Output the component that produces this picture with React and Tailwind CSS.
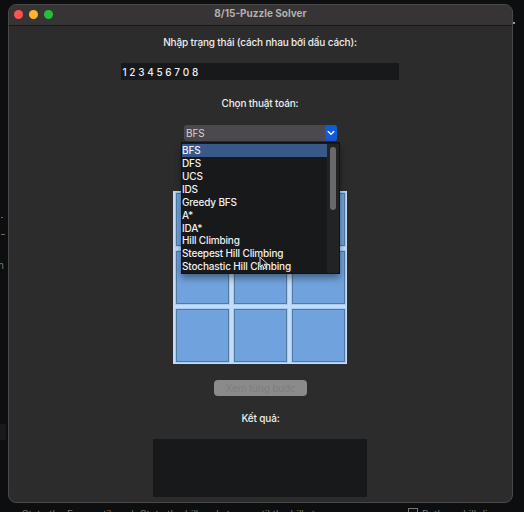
import React from "react";

const algorithms = [
  "BFS",
  "DFS",
  "UCS",
  "IDS",
  "Greedy BFS",
  "A*",
  "IDA*",
  "Hill Climbing",
  "Steepest Hill Climbing",
  "Stochastic Hill Climbing",
];

function TitleBar() {
  return (
    <header className="grid h-[21px] grid-cols-[80px_1fr_80px] items-center border-b border-[#171717] bg-[#373435]">
      <div className="-mt-px flex gap-[6px] pl-[5px]">
        <span className="size-[9px] rounded-full bg-[#ff544d]" />
        <span className="size-[9px] rounded-full bg-[#ffb429]" />
        <span className="size-[9px] rounded-full bg-[#24c138]" />
      </div>
      <h1 className="-mt-[4px] whitespace-nowrap text-center text-[10px] font-bold leading-[14px] text-[#b2b0b1]">
        8/15-Puzzle Solver
      </h1>
    </header>
  );
}

function Cursor() {
  return (
    <svg className="absolute left-[77px] top-[113px]" width="10" height="14" viewBox="0 0 10 14">
      <path d="M1 1v10l2.4-2.2 1.7 3.8 1.8-.8-1.7-3.6h3.5z" fill="#161718" stroke="#e4e4e4" strokeWidth="1" />
    </svg>
  );
}

function Dropdown() {
  return (
    <div className="absolute -left-[3px] top-[17px] z-10 flex h-[132px] w-[159px] border border-[#101112] bg-[#18191a] pt-px shadow-[0_4px_7px_rgba(0,0,0,0.4)]">
      <ul className="w-[145px] overflow-hidden">
        {algorithms.map((name, i) => (
          <li
            key={name}
            className={`h-[12.93px] whitespace-nowrap text-[10px] leading-[12px] text-[#f0f0f0] ${i === 0 ? "bg-[#38588a]" : ""}`}
          >
            {name}
          </li>
        ))}
      </ul>
      <div className="flex flex-1 justify-center bg-[#232324] pt-[3px]">
        <div className="h-[63px] w-[6px] rounded-full bg-[#68696a]" />
      </div>
      <Cursor />
    </div>
  );
}

function Board() {
  return (
    <div className="mt-[50px] grid h-[173px] w-[174px] grid-cols-3 grid-rows-3 gap-[5px] bg-[#c2dcfa] p-[2px] pl-[3px]">
      {Array.from({ length: 9 }, (_, i) => (
        <div key={i} className="border border-[#52799f] bg-[#70a2de] outline outline-1 outline-[#a7ccef]" />
      ))}
    </div>
  );
}

export default function App() {
  return (
    <div className="relative h-[512px] w-[524px] overflow-hidden bg-[#0d0e0f] pl-[8px] pt-[4px] font-['Inter','Noto_Sans',sans-serif]">
      <span className="absolute -left-[2px] top-[259px] text-[10px] leading-[12px] text-[#777]">n</span>
      <span className="absolute left-px top-[234px] h-px w-[4px] bg-[#666]" />
      <span className="absolute left-px top-[217px] h-px w-[2px] bg-[#666]" />
      <span className="absolute left-0 top-[424px] h-[16px] w-[6px] bg-[#17191b]" />
      <span className="absolute left-[513px] top-[22px] h-[2px] w-[2px] bg-[#999]" />
      <main className="h-[499px] w-[505px] overflow-hidden rounded-[8px] border border-[#4b4849] bg-[#2c2c2c]">
        <TitleBar />
        <div className="flex flex-col items-center pr-[2px] text-[10px] font-medium leading-[14px] tracking-[-0.16px] text-[#eeeeee]">
          <label className="mt-[9px] whitespace-nowrap pl-px tracking-[-0.16px]">Nhập trạng thái (cách nhau bởi dấu cách):</label>
          <div className="mt-[14px] h-[17px] w-[278px] bg-[#17191b] pl-[2px] leading-[18px] tracking-[0.02px]">1 2 3 4 5 6 7 0 8</div>
          <label className="mt-[16px] pl-px">Chọn thuật toán:</label>
          <div className="relative ml-[2px] mt-[15px] flex h-[16px] w-[153px] items-center rounded-[3px] bg-[#4b494d]">
            <span className="flex-1 pl-[2px] font-normal text-[#d5d4d6]">BFS</span>
            <span className="flex h-full w-[12px] items-center justify-center rounded-[3px] bg-[#105bd8]">
              <svg width="8" height="6" viewBox="0 0 8 6">
                <path d="M1.2 1.5 4 4.2l2.8-2.7" fill="none" stroke="white" strokeWidth="1.4" strokeLinecap="round" />
              </svg>
            </span>
            <Dropdown />
          </div>
          <Board />
          <button className="ml-[2px] mt-[16px] h-[16px] w-[93px] rounded-[4px] bg-[#8b8b8b] font-normal leading-[14px] text-[#7e7e7e]">
            Xem từng bước
          </button>
          <label className="mt-[15px] pl-[2px]">Kết quả:</label>
          <div className="mt-[14px] h-[58px] w-[214px] bg-[#17191b]" />
        </div>
      </main>
      <div className="flex h-[9px] items-start overflow-hidden pt-[5px] text-[10px] leading-[12px] text-[#777]">
        <span className="w-[400px] shrink-0 overflow-hidden whitespace-nowrap pl-[14px]">
          State the Euro until each State the hill and steps until the hill step
        </span>
        <span className="mr-[4px] h-[10px] w-[10px] shrink-0 border border-[#777]" />
        <span className="whitespace-nowrap">Python skill.di</span>
      </div>
    </div>
  );
}
